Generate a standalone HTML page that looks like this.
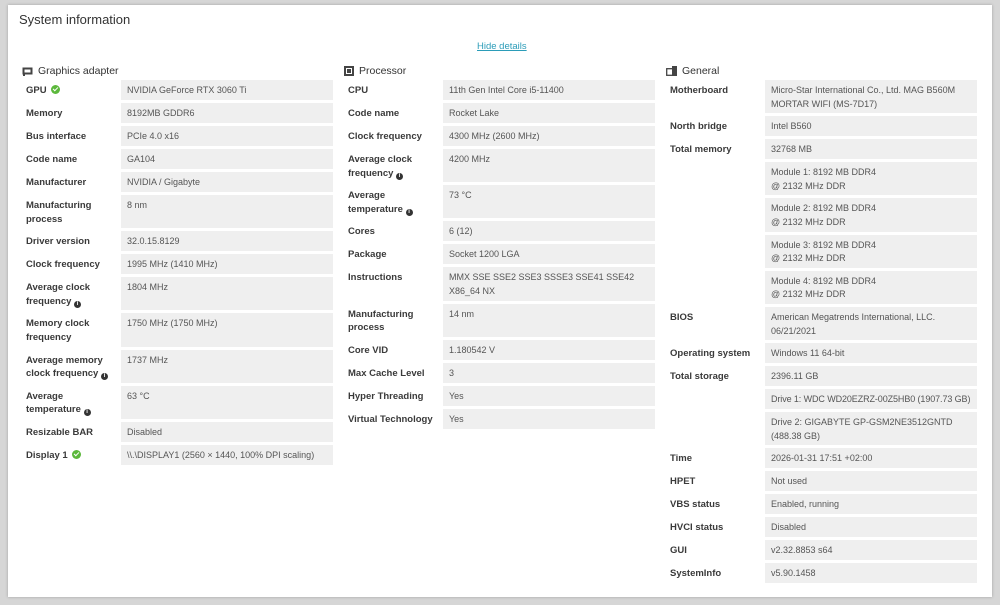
<!DOCTYPE html>
<html><head><style>
body{margin:0;width:1000px;height:605px;background:#d6d6d6;font-family:"Liberation Sans",sans-serif;overflow:hidden;position:relative}
.card{position:absolute;left:8px;top:5px;width:984px;height:592px;background:#fff;box-shadow:0 0 3px rgba(0,0,0,.25)}
h1{position:absolute;left:11px;top:7px;margin:0;font-size:13px;font-weight:normal;color:#333}
.link{position:absolute;left:469px;top:36px;font-size:9.5px;color:#2b9cb8;text-decoration:underline}
.col{position:absolute;top:58px}
.hd{font-size:10.5px;color:#333;height:16px;line-height:14px;margin-left:1px;display:flex;align-items:center}
.hd svg{margin-right:5px}
.row{display:flex;margin-bottom:3px}
.l{width:100px;flex:none;font-size:9.5px;font-weight:bold;color:#3a3a3a;padding:4px 10px 0 5px;line-height:13.5px;box-sizing:border-box}
.v{flex:1;background:#efefef;font-size:9px;color:#555;padding:4px 6px 2px;line-height:13.6px;min-height:14px}
.i{display:inline-block;width:7px;height:7px;border-radius:50%;background:#333;color:#fff;font-size:6px;line-height:7px;text-align:center;vertical-align:-1px;font-weight:bold}
.ok{display:inline-block;width:9px;height:9px;border-radius:50%;background:#5cb83c;vertical-align:-1px;position:relative;margin-left:2px}
.ok:after{content:"";position:absolute;left:2px;top:2px;width:4px;height:2px;border-left:1.5px solid #fff;border-bottom:1.5px solid #fff;transform:rotate(-45deg)}
</style></head><body>
<div class="card">
<h1>System information</h1>
<div class="link">Hide details</div>

<div class="col" style="left:13px;width:312px">
<div class="hd" style="margin-bottom:1px"><svg width="11" height="9" viewBox="0 0 11 9"><rect x="0.5" y="0.5" width="10" height="7" fill="#444"/><rect x="2.5" y="2.5" width="6" height="3" fill="#fff"/><rect x="1" y="7" width="2" height="2" fill="#444"/></svg>Graphics adapter</div>
<div class="row"><div class="l">GPU <span class="ok"></span></div><div class="v">NVIDIA GeForce RTX 3060 Ti</div></div>
<div class="row"><div class="l">Memory</div><div class="v">8192MB GDDR6</div></div>
<div class="row"><div class="l">Bus interface</div><div class="v">PCIe 4.0 x16</div></div>
<div class="row"><div class="l">Code name</div><div class="v">GA104</div></div>
<div class="row"><div class="l">Manufacturer</div><div class="v">NVIDIA / Gigabyte</div></div>
<div class="row"><div class="l">Manufacturing process</div><div class="v">8 nm<br>&nbsp;</div></div>
<div class="row"><div class="l">Driver version</div><div class="v">32.0.15.8129</div></div>
<div class="row"><div class="l">Clock frequency</div><div class="v">1995 MHz (1410 MHz)</div></div>
<div class="row"><div class="l">Average clock frequency <span class="i">i</span></div><div class="v">1804 MHz<br>&nbsp;</div></div>
<div class="row"><div class="l">Memory clock frequency</div><div class="v">1750 MHz (1750 MHz)<br>&nbsp;</div></div>
<div class="row"><div class="l">Average memory clock frequency <span class="i">i</span></div><div class="v">1737 MHz<br>&nbsp;</div></div>
<div class="row"><div class="l">Average<br>temperature <span class="i">i</span></div><div class="v">63 °C<br>&nbsp;</div></div>
<div class="row"><div class="l">Resizable BAR</div><div class="v">Disabled</div></div>
<div class="row"><div class="l">Display 1 <span class="ok"></span></div><div class="v">\\.\DISPLAY1 (2560 × 1440, 100% DPI scaling)</div></div>
</div>

<div class="col" style="left:335px;width:312px">
<div class="hd" style="margin-bottom:1px"><svg width="10" height="10" viewBox="0 0 10 10"><rect x="0" y="0" width="10" height="10" fill="#444"/><rect x="2" y="2" width="6" height="6" fill="#fff"/><rect x="3" y="3" width="4" height="4" fill="#444"/></svg>Processor</div>
<div class="row"><div class="l">CPU</div><div class="v">11th Gen Intel Core i5-11400</div></div>
<div class="row"><div class="l">Code name</div><div class="v">Rocket Lake</div></div>
<div class="row"><div class="l">Clock frequency</div><div class="v">4300 MHz (2600 MHz)</div></div>
<div class="row"><div class="l">Average clock frequency <span class="i">i</span></div><div class="v">4200 MHz<br>&nbsp;</div></div>
<div class="row"><div class="l">Average<br>temperature <span class="i">i</span></div><div class="v">73 °C<br>&nbsp;</div></div>
<div class="row"><div class="l">Cores</div><div class="v">6 (12)</div></div>
<div class="row"><div class="l">Package</div><div class="v">Socket 1200 LGA</div></div>
<div class="row"><div class="l">Instructions</div><div class="v">MMX SSE SSE2 SSE3 SSSE3 SSE41 SSE42 X86_64 NX</div></div>
<div class="row"><div class="l">Manufacturing process</div><div class="v">14 nm<br>&nbsp;</div></div>
<div class="row"><div class="l">Core VID</div><div class="v">1.180542 V</div></div>
<div class="row"><div class="l">Max Cache Level</div><div class="v">3</div></div>
<div class="row"><div class="l">Hyper Threading</div><div class="v">Yes</div></div>
<div class="row"><div class="l" style="white-space:nowrap">Virtual Technology</div><div class="v">Yes</div></div>
</div>

<div class="col" style="left:657px;width:312px">
<div class="hd" style="margin-bottom:1px"><svg width="11" height="10" viewBox="0 0 11 10"><rect x="0.7" y="2.7" width="6" height="6.6" fill="none" stroke="#444" stroke-width="1.3"/><rect x="6" y="0" width="5" height="10" fill="#444"/></svg>General</div>
<div class="row"><div class="l">Motherboard</div><div class="v">Micro-Star International Co., Ltd. MAG B560M MORTAR WIFI (MS-7D17)</div></div>
<div class="row"><div class="l">North bridge</div><div class="v">Intel B560</div></div>
<div class="row"><div class="l">Total memory</div><div class="v">32768 MB</div></div>
<div class="row"><div class="l"></div><div class="v">Module 1: 8192 MB DDR4<br>@ 2132 MHz DDR</div></div>
<div class="row"><div class="l"></div><div class="v">Module 2: 8192 MB DDR4<br>@ 2132 MHz DDR</div></div>
<div class="row"><div class="l"></div><div class="v">Module 3: 8192 MB DDR4<br>@ 2132 MHz DDR</div></div>
<div class="row"><div class="l"></div><div class="v">Module 4: 8192 MB DDR4<br>@ 2132 MHz DDR</div></div>
<div class="row"><div class="l">BIOS</div><div class="v">American Megatrends International, LLC.<br>06/21/2021</div></div>
<div class="row"><div class="l" style="white-space:nowrap">Operating system</div><div class="v">Windows 11 64-bit</div></div>
<div class="row"><div class="l">Total storage</div><div class="v">2396.11 GB</div></div>
<div class="row"><div class="l"></div><div class="v" style="white-space:nowrap;letter-spacing:-0.1px">Drive 1: WDC WD20EZRZ-00Z5HB0 (1907.73 GB)</div></div>
<div class="row"><div class="l"></div><div class="v">Drive 2: GIGABYTE GP-GSM2NE3512GNTD<br>(488.38 GB)</div></div>
<div class="row"><div class="l">Time</div><div class="v">2026-01-31 17:51 +02:00</div></div>
<div class="row"><div class="l">HPET</div><div class="v">Not used</div></div>
<div class="row"><div class="l">VBS status</div><div class="v">Enabled, running</div></div>
<div class="row"><div class="l">HVCI status</div><div class="v">Disabled</div></div>
<div class="row"><div class="l">GUI</div><div class="v">v2.32.8853 s64</div></div>
<div class="row"><div class="l">SystemInfo</div><div class="v">v5.90.1458</div></div>
</div>
</div>
</body></html>
